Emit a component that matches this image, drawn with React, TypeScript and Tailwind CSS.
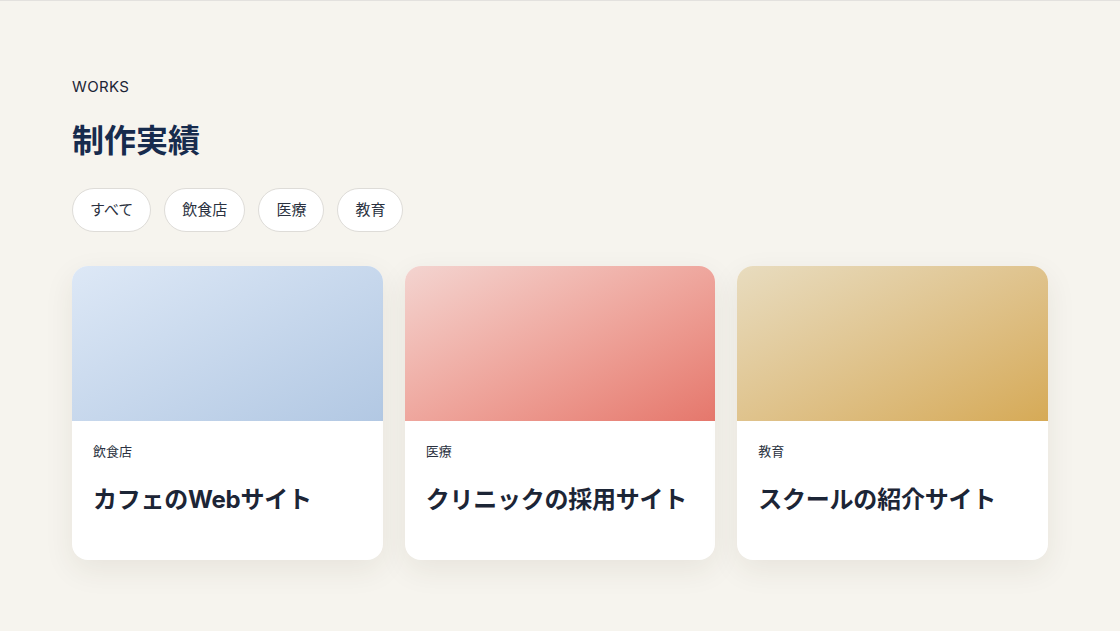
const filters = ["すべて", "飲食店", "医療", "教育"];

const works = [
  {
    category: "飲食店",
    title: "カフェのWebサイト",
    bg: "bg-gradient-to-br from-[#dde8f6] to-[#b2c8e3]",
  },
  {
    category: "医療",
    title: "クリニックの採用サイト",
    bg: "bg-gradient-to-br from-[#f3d4d0] to-[#e5776c]",
  },
  {
    category: "教育",
    title: "スクールの紹介サイト",
    bg: "bg-gradient-to-br from-[#e8dcbf] to-[#d6aa56]",
  },
];

export default function App() {
  return (
    <div
      className="min-h-screen bg-[#f6f4ee] border-t border-[#e3e1de] text-[#1c2536]"
      style={{ fontFamily: 'Inter, "Noto Sans CJK JP", sans-serif' }}
    >
      <section className="px-[72px] pt-[76px] pb-16">
        <p className="text-[15px] leading-5 tracking-wide">WORKS</p>
        <h2 className="mt-[22px] text-[32px] leading-[44px] font-bold text-[#172b4d]">
          制作実績
        </h2>

        <div className="mt-[25px] flex gap-[13px]">
          {filters.map((f) => (
            <button
              key={f}
              className="h-[44px] px-[17px] rounded-full bg-white border border-[#dedcd8] text-[15px] text-[#2a3140]"
            >
              {f}
            </button>
          ))}
        </div>

        <div className="mt-[34px] grid grid-cols-3 gap-[22px]">
          {works.map((w) => (
            <div
              key={w.title}
              className="bg-white rounded-2xl overflow-hidden shadow-[0_10px_30px_rgba(60,50,30,0.08)]"
            >
              <div className={`h-[155px] ${w.bg}`} />
              <div className="px-[21px] pt-[20px] pb-[43px]">
                <p className="text-[13px] leading-5 text-[#2a3140]">{w.category}</p>
                <h3 className="mt-[22px] text-[24px] leading-[34px] font-bold tracking-[-0.01em] text-[#1c2536]">
                  {w.title}
                </h3>
              </div>
            </div>
          ))}
        </div>
      </section>
    </div>
  );
}
